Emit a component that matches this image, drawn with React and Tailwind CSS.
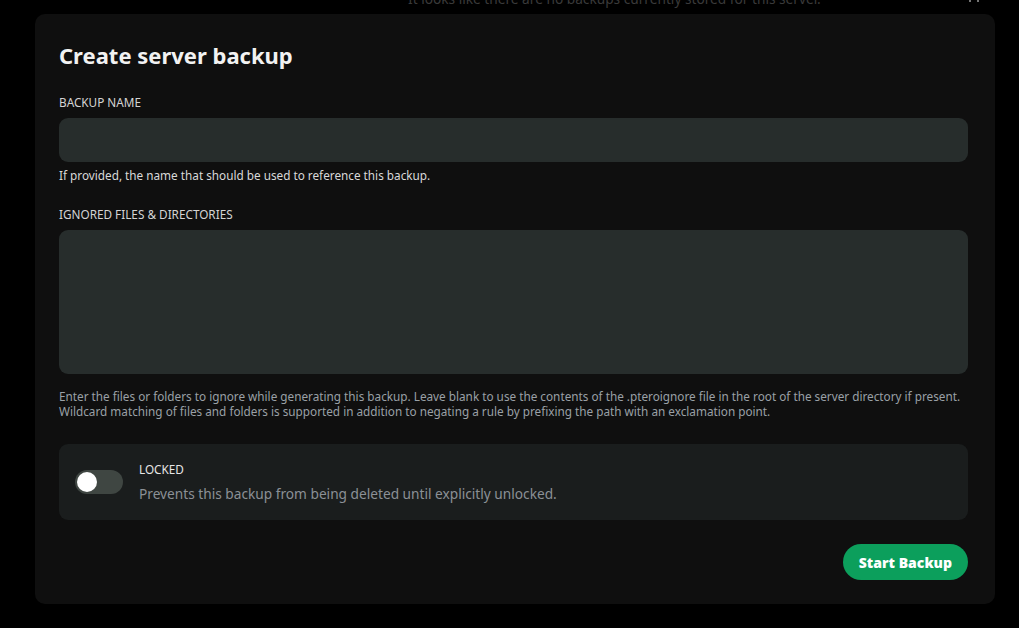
export default function App() {
  return (
    <div className="w-[1019px] h-[628px] bg-black overflow-hidden relative" style={{ fontFamily: '"Noto Sans", "Open Sans", sans-serif' }}>
      <div className="absolute left-[408px] top-[-11px] text-[13.7px] text-[#3a3a3a] whitespace-nowrap">It looks like there are no backups currently stored for this server.</div>
      <div className="absolute left-[968px] top-0">
        <svg width="12" height="4" viewBox="0 0 12 4"><path d="M2 0 L2 2 M10 0 L10 2" stroke="#9a9a9a" strokeWidth="1.5" /></svg>
      </div>
      <div className="pt-[14px] pl-[35px]">
        <div className="w-[960px] h-[590px] bg-[#0f0f0f] rounded-[10px] pl-[24px] pr-[27px] pt-[25px]">
          <h2 className="text-[22px] font-bold text-[#f2f2f2] leading-[32px]">Create server backup</h2>
          <div className="mt-[23px] text-[11.75px] text-[#d4d4d4] leading-[16px] uppercase">Backup Name</div>
          <div className="mt-[8px] h-[44px] rounded-[9px] bg-[#272d2c]" />
          <div className="mt-[5px] text-[11.75px] text-[#d9d9d9] leading-[16px]">If provided, the name that should be used to reference this backup.</div>
          <div className="mt-[23px] text-[11.75px] text-[#d4d4d4] leading-[16px] uppercase">Ignored Files &amp; Directories</div>
          <div className="mt-[8px] h-[144px] rounded-[9px] bg-[#272d2c]" />
          <div className="mt-[15px] text-[11.75px] text-[#9aa0a6] leading-[15px]">
            Enter the files or folders to ignore while generating this backup. Leave blank to use the contents of the .pteroignore file in the root of the server directory if present. Wildcard matching of files and folders is supported in addition to negating a rule by prefixing the path with an exclamation point.
          </div>
          <div className="mt-[25px] h-[76px] rounded-[9px] bg-[#1a1d1d] flex items-center px-[16px] gap-[16px]">
            <div className="w-[48px] h-[24px] rounded-full bg-[#3f4642] p-[2px] flex items-center">
              <div className="w-[20px] h-[20px] rounded-full bg-white" />
            </div>
            <div className="flex flex-col">
              <div className="text-[11.75px] text-[#e6e6e6] leading-[16px]">LOCKED</div>
              <div className="mt-[8px] text-[13.7px] text-[#8b9096] leading-[18px]">Prevents this backup from being deleted until explicitly unlocked.</div>
            </div>
          </div>
          <div className="mt-[24px] flex justify-end">
            <button className="h-[36px] px-[16px] rounded-full bg-[#0c9f5c] text-white text-[14px] font-black">Start Backup</button>
          </div>
        </div>
      </div>
    </div>
  );
}
